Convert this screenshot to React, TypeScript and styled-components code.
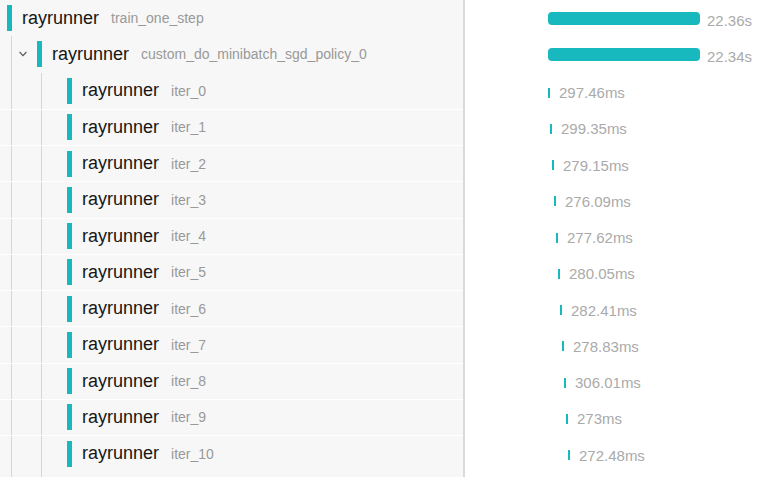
import styled, { createGlobalStyle } from 'styled-components';

const TEAL = '#17b9bf';
const ROW_H = '36.25px';
const TOTAL_MS = 22360;
const TRACK_PX = 152;

interface Span {
    name: string;
    label: string;
    ms: number;
    depth: number;
    start: number;
    expandable?: boolean;
    divided?: boolean;
}

const iterMs = [297.46, 299.35, 279.15, 276.09, 277.62, 280.05, 282.41, 278.83, 306.01, 273, 272.48];

const spans: Span[] = [
    { name: 'rayrunner', label: 'train_one_step', ms: 22360, depth: 0, start: 0 },
    { name: 'rayrunner', label: 'custom_do_minibatch_sgd_policy_0', ms: 22340, depth: 1, start: 0, expandable: true },
];

let cursor = 0;
iterMs.forEach((ms, i) => {
    spans.push({ name: 'rayrunner', label: `iter_${i}`, ms, depth: 2, start: cursor, divided: i > 0 });
    cursor += ms + 8;
});

const toPx = (ms: number) => Math.round((ms / TOTAL_MS) * TRACK_PX);

const formatMs = (ms: number) => (ms >= 1000 ? `${(ms / 1000).toFixed(2)}s` : `${ms}ms`);

const GlobalStyle = createGlobalStyle`
    html, body {
        margin: 0;
        padding: 0;
        background: #fff;
    }
    body {
        font-family: 'Liberation Sans', Arial, sans-serif;
        overflow: hidden;
    }
`;

const Page = styled.div`
    display: flex;
    height: 100vh;
`;

const TreePane = styled.section`
    width: 463px;
    flex-shrink: 0;
    display: flex;
    flex-direction: column;
    background: #f7f7f7;
    border-right: 2px solid #d9d9d9;
`;

const TreeRow = styled.div<{ $divided?: boolean }>`
    display: flex;
    align-items: stretch;
    height: ${ROW_H};
    box-sizing: border-box;
    border-top: ${(p) => (p.$divided ? '1px solid #fff' : 'none')};
`;

const Filler = styled.div`
    display: flex;
    flex: 1;
`;

const Guide = styled.span`
    width: 30px;
    flex-shrink: 0;
    display: flex;
    align-items: center;
    justify-content: flex-end;
    padding-right: 3px;
    box-sizing: border-box;
    background: linear-gradient(#d6d6d6, #d6d6d6) 11px 0 / 1px 100% no-repeat;
`;

const Content = styled.div`
    display: flex;
    align-items: center;
    min-width: 0;
`;

const Marker = styled.span`
    width: 5px;
    height: 26px;
    margin-left: 7px;
    margin-right: 10px;
    background: ${TEAL};
    flex-shrink: 0;
`;

const Name = styled.span`
    font-size: 18px;
    color: #161616;
`;

const Label = styled.span`
    font-size: 14px;
    color: #999;
    margin-left: 12px;
    white-space: nowrap;
`;

const TimePane = styled.section`
    flex: 1;
    display: flex;
    flex-direction: column;
    padding-left: 83px;
`;

const TimeRow = styled.div`
    display: flex;
    align-items: center;
    height: ${ROW_H};
    padding-top: 4px;
    box-sizing: border-box;
`;

const Bar = styled.span<{ $tick: boolean }>`
    flex-shrink: 0;
    height: ${(p) => (p.$tick ? '10px' : '13px')};
    margin-top: ${(p) => (p.$tick ? '0' : '-3px')};
    border-radius: ${(p) => (p.$tick ? '0' : '4px')};
    background: ${TEAL};
`;

const Duration = styled.span<{ $tick: boolean }>`
    font-size: 15px;
    color: #aaa;
    margin-left: ${(p) => (p.$tick ? '9px' : '7px')};
    white-space: nowrap;
`;

function Chevron() {
    return (
        <svg width="8" height="6" viewBox="0 0 8 6">
            <path d="M0.6 1 L4 4.6 L7.4 1" fill="none" stroke="#555" strokeWidth="1.1" />
        </svg>
    );
}

function Guides({ depth, expandable }: { depth: number; expandable?: boolean }) {
    return (
        <>
            {Array.from({ length: depth }, (_, i) => (
                <Guide key={i}>{expandable && i === depth - 1 && <Chevron />}</Guide>
            ))}
        </>
    );
}

function App() {
    return (
        <Page>
            <GlobalStyle />
            <TreePane>
                {spans.map((s, i) => (
                    <TreeRow key={i} $divided={s.divided}>
                        <Guides depth={s.depth} expandable={s.expandable} />
                        <Content>
                            <Marker />
                            <Name>{s.name}</Name>
                            <Label>{s.label}</Label>
                        </Content>
                    </TreeRow>
                ))}
                <Filler>
                    <Guides depth={2} />
                </Filler>
            </TreePane>
            <TimePane>
                {spans.map((s, i) => {
                    const width = Math.max(2, toPx(s.ms));
                    const tick = width < 6;
                    return (
                        <TimeRow key={i}>
                            <Bar $tick={tick} style={{ width, marginLeft: toPx(s.start) }} />
                            <Duration $tick={tick}>{formatMs(s.ms)}</Duration>
                        </TimeRow>
                    );
                })}
            </TimePane>
        </Page>
    );
}

export default App;
